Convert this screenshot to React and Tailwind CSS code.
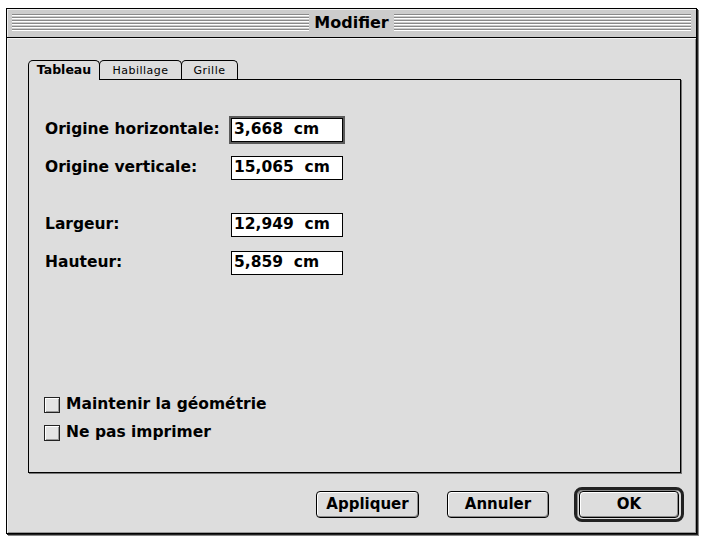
import React from 'react';

const stripes =
  'bg-[repeating-linear-gradient(to_bottom,#8a8a8a_0px,#8a8a8a_1px,#ffffff_1px,#ffffff_2px,#cccccc_2px,#cccccc_3px)]';

const Field = ({ value, focused }) => (
  <div
    className={
      'w-[112px] h-[24px] bg-white border border-black flex items-center pl-[2px] text-[15.5px] font-bold whitespace-pre leading-none ' +
      (focused ? 'shadow-[0_0_0_2px_#5a5a5a]' : '')
    }
  >
    {value}
  </div>
);

const Row = ({ label, value, focused }) => (
  <div className="h-[38px] flex items-center">
    <span className="w-[186px] text-[15.5px] font-bold">{label}</span>
    <Field value={value} focused={focused} />
  </div>
);

const Check = ({ label }) => (
  <div className="h-[28px] flex items-center -ml-px">
    <span className="w-[16px] h-[16px] border border-[#222] bg-[#e4e4e4] shadow-[inset_1px_1px_0_#fff,inset_-1px_-1px_0_#999]" />
    <span className="ml-[6px] text-[15.5px] font-bold">{label}</span>
  </div>
);

const Btn = ({ children, className = '' }) => (
  <button
    className={
      'h-[27px] rounded-[4px] border border-black bg-[#dddddd] text-[15px] font-bold leading-none shadow-[inset_1px_1px_0_#fff,inset_-1px_-1px_0_#8c8c8c] ' +
      className
    }
  >
    {children}
  </button>
);

export default function App() {
  return (
    <div className="w-[703px] h-[539px] bg-white pt-[8px] pl-[6px] font-['DejaVu_Sans',sans-serif] text-black">
      <div className="w-[691px] h-[526px] border border-black bg-[#dddddd] shadow-[1px_1px_0_#222,2px_2px_0_#888] flex flex-col">
        {/* title bar */}
        <div className="h-[29px] shrink-0 bg-[#cccccc] border-b border-black flex items-center px-[5px] shadow-[inset_1px_1px_0_#eee]">
          <div className={'flex-1 h-[18px] ' + stripes} />
          <span className="px-[5px] text-[16px] font-bold leading-none">Modifier</span>
          <div className={'flex-1 h-[18px] ' + stripes} />
        </div>

        {/* body */}
        <div className="flex-1 flex flex-col pt-[22px] pl-[21px] shadow-[inset_1px_1px_0_#f4f4f4,inset_-1px_-1px_0_#999]">
          {/* tabs */}
          <div className="flex items-end h-[19px]">
            <div className="relative z-10 w-[72px] h-[20px] -mb-px bg-[#dddddd] border border-b-0 border-black rounded-t-[5px] flex items-center justify-center text-[12.5px] font-bold leading-none pb-px">
              Tableau
            </div>
            <div className="w-[83px] h-[19px] -ml-px border border-b-0 border-black rounded-t-[5px] flex items-center justify-center text-[11px] tracking-[0.5px] leading-none">
              Habillage
            </div>
            <div className="w-[57px] h-[19px] -ml-px border border-b-0 border-black rounded-t-[5px] flex items-center justify-center text-[11px] tracking-[0.5px] leading-none">
              Grille
            </div>
          </div>

          {/* panel */}
          <div className="w-[653px] h-[394px] border border-black shadow-[1px_1px_0_#777] flex flex-col pt-[31px] pl-[16px] pb-[25px]">
            <Row label="Origine horizontale:" value="3,668  cm" focused />
            <Row label="Origine verticale:" value="15,065  cm" />
            <div className="h-[19px]" />
            <Row label="Largeur:" value="12,949  cm" />
            <Row label="Hauteur:" value="5,859  cm" />
            <div className="mt-auto">
              <Check label="Maintenir la géométrie" />
              <Check label="Ne pas imprimer" />
            </div>
          </div>

          {/* buttons */}
          <div className="mt-[14px] h-[35px] flex items-center justify-end pr-[12px]">
            <Btn className="w-[103px]">Appliquer</Btn>
            <Btn className="w-[102px] ml-[28px]">Annuler</Btn>
            <div className="ml-[25px] border-[3px] border-[#222] rounded-[8px] px-[2px] py-[1px] shadow-[inset_1px_1px_0_#888]">
              <Btn className="w-[100px] block">OK</Btn>
            </div>
          </div>
        </div>
      </div>
    </div>
  );
}
